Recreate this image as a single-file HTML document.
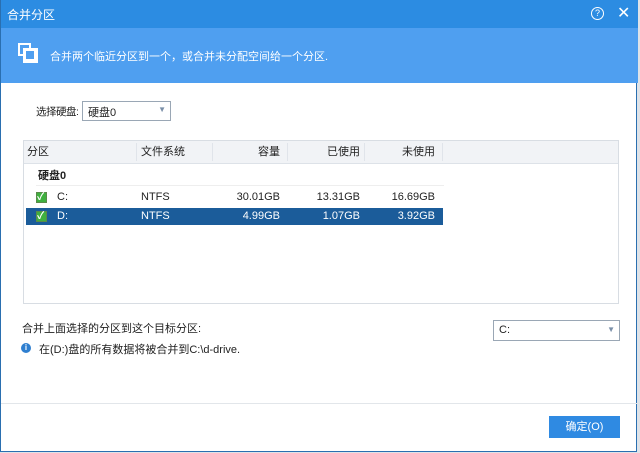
<!DOCTYPE html><html><head><meta charset="utf-8"><style>
body{margin:0;width:640px;height:453px;overflow:hidden;background:#dfe3e8;font-family:"Liberation Sans","Noto Sans CJK SC",sans-serif;font-size:11px;color:#222;position:relative}
.win{position:absolute;left:0;top:0;width:637px;height:452px;background:#fff;border-left:1px solid #2a6fb0;border-bottom:1px solid #2a6fb0;border-right:1px solid #2a6fb0;box-sizing:border-box}
.a{position:absolute}
.title{left:0;top:0;width:637px;height:28px;background:#2c8ce2;color:#fff;font-size:12px}
.ban{left:0;top:28px;width:637px;height:55px;background:#4f9ff0;color:#fff;font-size:11px}
.th{position:absolute;top:0;height:22px;line-height:22px}
.r{text-align:right}
.cb{position:absolute;width:9px;height:9px;border:1px solid #5a8a4a;background:#3fb03f}
.ck{position:absolute;color:#fff;font-weight:bold;font-size:10px}
</style></head><body>
<div class="win">
<div class="a title"><span class="a" style="left:6px;top:6px">合并分区</span>
<span class="a" style="left:590px;top:7px;width:11px;height:11px;border:1.3px solid #fff;border-radius:50%;font-size:9px;line-height:11px;text-align:center">?</span>
<span class="a" style="left:616px;top:3px;font-size:16px;font-weight:300">✕</span></div>
<div class="a ban">
<div class="a" style="left:17px;top:15px;width:13px;height:13px;border:2px solid #fff;box-sizing:border-box"></div>
<div class="a" style="left:22px;top:20px;width:15px;height:15px;background:#fff"></div>
<div class="a" style="left:25px;top:23px;width:8px;height:8px;background:#4f9ff0"></div>
<span class="a" style="left:49px;top:20px">合并两个临近分区到一个，或合并未分配空间给一个分区.</span></div>
<span class="a" style="left:35px;top:104px;font-size:10.5px;letter-spacing:-0.5px">选择硬盘:</span>
<div class="a" style="left:81px;top:101px;width:89px;height:20px;border:1px solid #9aa7b5;box-sizing:border-box"><span class="a" style="left:5px;top:2px">硬盘0</span><span class="a" style="right:4px;top:3px;font-size:8px;color:#7a8fa8">▼</span></div>
<div class="a" style="left:22px;top:140px;width:596px;height:164px;border:1px solid #d8dde3;box-sizing:border-box">
<div class="a" style="left:0;top:0;width:594px;height:22px;background:#f1f3f6;border-bottom:1px solid #dde2e8">
<span class="th" style="left:3px">分区</span><span class="th" style="left:117px">文件系统</span>
<span class="th r" style="left:190px;width:66px">容量</span><span class="th r" style="left:270px;width:66px">已使用</span><span class="th r" style="left:345px;width:66px">未使用</span>
<span class="a" style="left:112px;top:2px;height:18px;border-left:1px solid #e0e4ea"></span>
<span class="a" style="left:188px;top:2px;height:18px;border-left:1px solid #e0e4ea"></span>
<span class="a" style="left:263px;top:2px;height:18px;border-left:1px solid #e0e4ea"></span>
<span class="a" style="left:340px;top:2px;height:18px;border-left:1px solid #e0e4ea"></span>
<span class="a" style="left:418px;top:2px;height:18px;border-left:1px solid #e0e4ea"></span></div>
<span class="a" style="left:14px;top:26px;font-weight:bold">硬盘0</span>
<div class="a" style="left:12px;top:44px;width:408px;border-top:1px solid #eee"></div>
<div class="a" style="left:2px;top:48px;width:417px;height:17px;line-height:17px">
<span class="cb" style="left:10px;top:3px"></span><span class="ck" style="left:11px;top:0">✓</span>
<span class="a" style="left:31px">C:</span><span class="a" style="left:115px">NTFS</span>
<span class="a r" style="left:190px;width:64px">30.01GB</span><span class="a r" style="left:268px;width:66px">13.31GB</span><span class="a r" style="left:343px;width:66px">16.69GB</span></div>
<div class="a" style="left:2px;top:67px;width:417px;height:17px;line-height:17px;background:#1b5c9a;color:#fff">
<span class="cb" style="left:10px;top:3px"></span><span class="ck" style="left:11px;top:0">✓</span>
<span class="a" style="left:31px">D:</span><span class="a" style="left:115px">NTFS</span>
<span class="a r" style="left:190px;width:64px">4.99GB</span><span class="a r" style="left:268px;width:66px">1.07GB</span><span class="a r" style="left:343px;width:66px">3.92GB</span></div>
</div>
<span class="a" style="left:21px;top:320px">合并上面选择的分区到这个目标分区:</span>
<span class="a" style="left:20px;top:343px;width:10px;height:10px;border-radius:50%;background:#2f7fd0;color:#fff;font-size:8px;line-height:10px;text-align:center;font-weight:bold">i</span>
<span class="a" style="left:38px;top:341px">在(D:)盘的所有数据将被合并到C:\d-drive.</span>
<div class="a" style="left:492px;top:320px;width:127px;height:21px;border:1px solid #9aa7b5;box-sizing:border-box"><span class="a" style="left:5px;top:3px">C:</span><span class="a" style="right:4px;top:4px;font-size:8px;color:#7a8fa8">▼</span></div>
<div class="a" style="left:0;top:403px;width:636px;border-top:1px solid #e2e6ea"></div>
<div class="a" style="left:548px;top:416px;width:71px;height:22px;background:#2f8ae2;color:#fff;text-align:center;line-height:22px">确定(O)</div>
</div>
</body></html>
